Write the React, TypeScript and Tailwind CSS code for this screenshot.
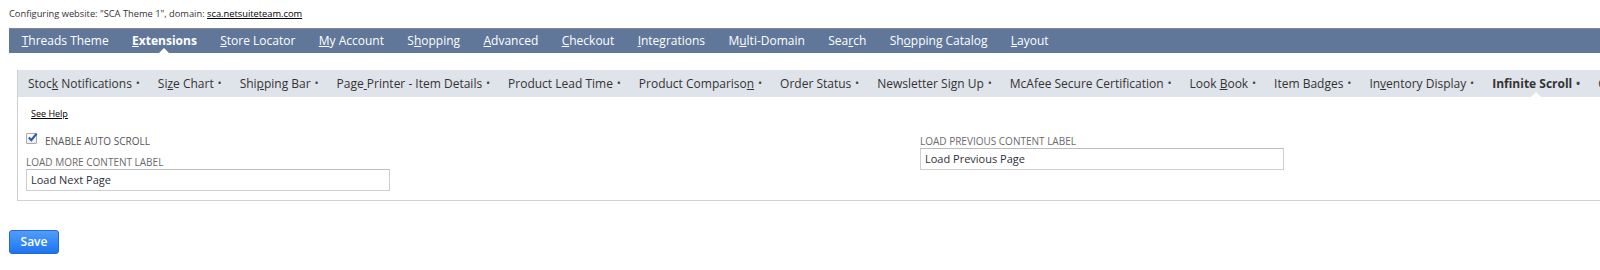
import React from 'react';

const mainTabs = [
  { pre: '', key: 'T', post: 'hreads Theme' },
  { pre: '', key: 'E', post: 'xtensions', active: true },
  { pre: '', key: 'S', post: 'tore Locator' },
  { pre: '', key: 'M', post: 'y Account' },
  { pre: 'S', key: 'h', post: 'opping' },
  { pre: '', key: 'A', post: 'dvanced' },
  { pre: '', key: 'C', post: 'heckout' },
  { pre: '', key: 'I', post: 'ntegrations' },
  { pre: 'M', key: 'u', post: 'lti-Domain' },
  { pre: 'Sea', key: 'r', post: 'ch' },
  { pre: 'Sh', key: 'o', post: 'pping Catalog' },
  { pre: '', key: 'L', post: 'ayout' },
];

const subTabs = [
  { pre: 'Stoc', key: 'k', post: ' Notifications' },
  { pre: 'Si', key: 'z', post: 'e Chart' },
  { pre: 'Shi', key: 'p', post: 'ping Bar' },
  { pre: 'Page', key: ' ', post: 'Printer - Item Details' },
  { pre: 'Product Lead Time', key: '', post: '' },
  { pre: 'Product Compariso', key: 'n', post: '' },
  { pre: 'Order Status', key: '', post: '' },
  { pre: 'Newsletter Sign Up', key: '', post: '' },
  { pre: 'McAfee Secure Certification', key: '', post: '' },
  { pre: 'Look ', key: 'B', post: 'ook' },
  { pre: 'Item Badges', key: '', post: '' },
  { pre: 'In', key: 'v', post: 'entory Display' },
  { pre: 'Infinite Scroll', key: '', post: '', active: true },
  { pre: 'Color Swatches', key: '', post: '' },
];

function Caret({ color }: { color: string }) {
  return (
    <svg className="absolute bottom-0 left-1/2 -translate-x-1/2" width="10" height="5" viewBox="0 0 10 5">
      <polygon points="0,5 5,0 10,5" fill={color} />
    </svg>
  );
}

function Field({ label, value }: { label: string; value: string }) {
  return (
    <div className="flex flex-col">
      <label className="text-[10px] text-[#6b6b6b] leading-[12px] uppercase">{label}</label>
      <div className="mt-px w-[364px] h-[22px] border border-[#cfcfcf] border-t-[#bdbdbd] bg-white px-[4px] flex items-center text-[11px] text-[#2f2f3a]">
        {value}
      </div>
    </div>
  );
}

export default function App() {
  return (
    <div className="w-[1600px] h-[270px] overflow-hidden bg-white font-['Open_Sans','Liberation_Sans',sans-serif] px-[9px]">
      <div className="h-[28px] pt-[7px] text-[9.3px] leading-[14px] text-[#333]">
        Configuring website: "SCA Theme 1", domain: <span className="underline text-black">sca.netsuiteteam.com</span>
      </div>

      <div className="-mr-[9px] h-[25px] bg-[#61779a] border-t border-[#7f8796] flex items-stretch pl-px">
        {mainTabs.map((t, i) => (
          <div
            key={i}
            className={`relative flex items-center px-[11.7px] text-[12px] text-white whitespace-nowrap ${t.active ? 'font-bold' : ''}`}
          >
            {t.pre}
            <span className="underline">{t.key}</span>
            {t.post}
            {t.active && <Caret color="#ffffff" />}
          </div>
        ))}
      </div>

      <div className="ml-[8px] -mr-[9px] mt-[17px] border-l border-b border-[#d0d0d0] h-[131px]">
        <div className="h-[27px] bg-[#dfe3ea] flex items-stretch pl-px">
          {subTabs.map((t, i) => (
            <div
              key={i}
              className={`relative flex items-center px-[9px] text-[12px] text-[#333] whitespace-nowrap ${t.active ? 'font-bold' : ''}`}
            >
              <span className="whitespace-pre">
                {t.pre}
                {t.key && <span className="underline">{t.key}</span>}
                {t.post}
              </span>
              <span className="ml-[3.8px] text-[11px] text-[#444]">•</span>
              {t.active && <Caret color="#ffffff" />}
            </div>
          ))}
        </div>

        <div className="pl-[13px] pt-[11px] text-[9px] leading-[12px]">
          <span className="underline text-black">See Help</span>
        </div>

        <div className="flex pl-[8px] mt-[13px]">
          <div className="w-[894px] flex flex-col">
            <div className="flex items-start h-[14px]">
              <span className="relative w-[11px] h-[11px] border border-[#a9a9a9] bg-gradient-to-b from-white to-[#ececec] rounded-[1px]">
                <svg className="absolute -top-[2px] left-0" width="11" height="11" viewBox="0 0 11 11">
                  <path d="M1.8 5.6 L4.3 8.2 L9.6 1.6" fill="none" stroke="#2a5ca8" strokeWidth="2.2" />
                </svg>
              </span>
              <span className="ml-[8px] pt-[1px] text-[10px] text-[#555] leading-[14px]">ENABLE AUTO SCROLL</span>
            </div>
            <div className="mt-[9px]">
              <Field label="Load More Content Label" value="Load Next Page" />
            </div>
          </div>
          <div className="flex flex-col pt-[2px]">
            <Field label="Load Previous Content Label" value="Load Previous Page" />
          </div>
        </div>
      </div>

      <div className="mt-[27px]">
        <button className="w-[50px] h-[24px] rounded-[3px] border border-[#2767d0] bg-gradient-to-b from-[#4f9dfc] to-[#1d74ef] text-white text-[12px] font-semibold">
          Save
        </button>
      </div>
    </div>
  );
}
